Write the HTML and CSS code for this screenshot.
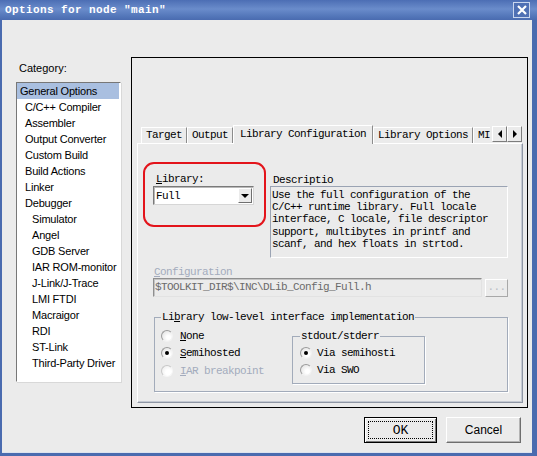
FILE: index.html
```html
<!DOCTYPE html>
<html lang="en">
<head>
	<meta charset="UTF-8">
	<title>Options for node "main"</title>
	<link rel="stylesheet" href="styles.css">
</head>
<body>
	<div class="window">
		<div class="titlebar">
			<span class="title">Options for node "main"</span>
			<span class="close">
				<svg width="10" height="10" viewBox="0 0 10 10"><path d="M1 1L9 9M9 1L1 9" stroke="#fff" stroke-width="2.2"/></svg>
			</span>
		</div>
		<div class="client">
			<div class="main">
				<div class="category">
					<div class="cat-label">Category:</div>
					<ul class="cat-list">
						<li class="sel">General Options</li>
						<li>C/C++ Compiler</li>
						<li>Assembler</li>
						<li>Output Converter</li>
						<li>Custom Build</li>
						<li>Build Actions</li>
						<li>Linker</li>
						<li>Debugger</li>
						<li class="sub">Simulator</li>
						<li class="sub">Angel</li>
						<li class="sub">GDB Server</li>
						<li class="sub">IAR ROM-monitor</li>
						<li class="sub">J-Link/J-Trace</li>
						<li class="sub">LMI FTDI</li>
						<li class="sub">Macraigor</li>
						<li class="sub">RDI</li>
						<li class="sub">ST-Link</li>
						<li class="sub">Third-Party Driver</li>
					</ul>
				</div>
				<div class="page">
					<div class="tabstrip">
						<div class="tablist">
							<span class="tab">Target</span>
							<span class="tab">Output</span>
							<span class="tab active">Library Configuration</span>
							<span class="tab">Library Options</span>
							<span class="tab last">MI</span>
						</div>
						<span class="spin"><i class="arr-left"></i></span>
						<span class="spin"><i class="arr-right"></i></span>
					</div>
					<div class="tabbody">
						<div class="librow">
							<div class="libbox">
								<div class="mono-label"><u>L</u>ibrary:</div>
								<div class="combo">
									<span>Full</span>
									<span class="drop"><i class="arr-down"></i></span>
								</div>
							</div>
							<div class="desc">
								<div class="mono-label">Descriptio</div>
								<div class="desc-text">Use the full configuration of the<br>C/C++ runtime library. Full locale<br>interface, C locale, file descriptor<br>support, multibytes in printf and<br>scanf, and hex floats in strtod.</div>
							</div>
						</div>
						<div class="config">
							<div class="mono-label disabled"><u>C</u>onfiguration</div>
							<div class="config-row">
								<div class="field">$TOOLKIT_DIR$\INC\DLib_Config_Full.h</div>
								<div class="browse">...</div>
							</div>
						</div>
						<fieldset class="group">
							<legend>Li<u>b</u>rary low-level interface implementation</legend>
							<div class="group-body">
								<div class="radios">
									<div class="radio-row"><span class="radio"></span><span><u>N</u>one</span></div>
									<div class="radio-row"><span class="radio on"></span><span><u>S</u>emihosted</span></div>
									<div class="radio-row disabled"><span class="radio off"></span><span><u>I</u>AR breakpoint</span></div>
								</div>
								<fieldset class="subgroup">
									<legend>stdout/stderr</legend>
									<div class="radio-row"><span class="radio on"></span><span>Via semihosti</span></div>
									<div class="radio-row"><span class="radio"></span><span>Via SWO</span></div>
								</fieldset>
							</div>
						</fieldset>
					</div>
				</div>
			</div>
			<div class="buttons">
				<button class="btn default"><span>OK</span></button>
				<button class="btn cancel">Cancel</button>
			</div>
		</div>
	</div>
</body>
</html>
```

FILE: styles.css
```css
*{
	box-sizing: border-box;
}
body,ul,li,fieldset,legend{
	margin: 0;
	padding: 0;
}
body{
	background: #ebebeb;
	font: 11px "Liberation Sans", Arial, sans-serif;
	color: #000;
}
.window{
	width: 537px;
	height: 456px;
	display: flex;
	flex-direction: column;
	background: #4a6baf;
}
/* title bar */
.titlebar{
	height: 20px;
	display: flex;
	align-items: center;
	justify-content: space-between;
	padding: 0 7px 0 5px;
	background: linear-gradient(#4c6eb4, #6a8ccb 45%, #5477ba 80%, #4a6bb0);
}
.title{
	font: bold 11px/14px "Liberation Mono", monospace;
	letter-spacing: 0.4px;
	color: #fff;
}
.close{
	width: 17px;
	height: 16px;
	display: flex;
	align-items: center;
	justify-content: center;
	border: 1px solid #c9d6ee;
	background: #4f70b4;
}
/* client area */
.client{
	flex: 1;
	margin: 0 5px 3px 2px;
	background: #ebebeb;
	display: flex;
	flex-direction: column;
	border-bottom: 1px solid #dde3ee;
}
.main{
	display: flex;
	gap: 10px;
	padding: 37px 0 0 14px;
}
.category{
	width: 105px;
	padding-top: 4px;
}
.cat-label{
	line-height: 14px;
	padding-left: 3px;
	margin-bottom: 7px;
}
.cat-list{
	list-style: none;
	height: 300px;
	background: #fff;
	border: 1px solid;
	border-color: #777 #fff #fff #777;
	box-shadow: 1px 1px 0 #d8d8d8;
	letter-spacing: -0.2px;
}
.cat-list li{
	height: 16px;
	line-height: 16px;
	padding-left: 8px;
	white-space: nowrap;
}
.cat-list .sel{
	padding-left: 3px;
	margin-right: 1px;
	background: #a9bfe0;
}
.cat-list .sub{
	padding-left: 15px;
}
/* property page */
.page{
	width: 397px;
	height: 351px;
	border: 1px solid #000;
	padding: 67px 4px 4px 5px;
	display: flex;
	flex-direction: column;
	font: 11px/12px "Liberation Mono", monospace;
	letter-spacing: -0.6px;
}
.tabstrip{
	height: 18px;
	display: flex;
	align-items: flex-end;
	position: relative;
	z-index: 1;
}
.tablist{
	flex: 1;
	display: flex;
	align-items: flex-end;
	padding-left: 4px;
	overflow: hidden;
	height: 19px;
	margin-bottom: -1px;
}
.tab{
	height: 16px;
	line-height: 15px;
	padding: 0 4px;
	white-space: nowrap;
	border-top: 1px solid #fff;
	border-left: 1px solid #fff;
	border-right: 1px solid #8c8c8c;
	background: #ebebeb;
	margin-bottom: 1px;
}
.tab.active{
	height: 19px;
	padding: 1px 6px 0 6px;
	margin-bottom: 0;
	line-height: 14px;
	position: relative;
	z-index: 2;
}
.tab.last{
	padding: 0 0 0 4px;
	border-right: none;
}
.spin{
	width: 15px;
	height: 16px;
	margin-bottom: 1px;
	display: flex;
	align-items: center;
	justify-content: center;
	background: #ebebeb;
	border: 1px solid;
	border-color: #fff #7c7c7c #7c7c7c #fff;
}
.spin:last-child{
	margin-right: 1px;
}
.arr-left,.arr-right,.arr-down{
	display: block;
	width: 0;
	height: 0;
	border: 4px solid transparent;
}
.arr-left{
	border-right-color: #000;
	border-left-width: 0;
}
.arr-right{
	border-left-color: #000;
	border-right-width: 0;
}
.arr-down{
	border-top-color: #000;
	border-bottom-width: 0;
}
.tabbody{
	flex: 1;
	border: 1px solid;
	border-color: #fff #8e96a4 #8e96a4 #fff;
	box-shadow: inset -1px -1px 0 #c5cad3;
	padding: 18px 0 0 5px;
}
.librow{
	display: flex;
	gap: 4px;
	align-items: flex-start;
}
.libbox{
	width: 123px;
	height: 65px;
	border: 2px solid #e3141b;
	border-radius: 11px;
	padding: 9px 0 0 8px;
}
.libbox .mono-label{
	padding-left: 3px;
	margin-bottom: 1px;
}
.mono-label{
	height: 12px;
	line-height: 12px;
	white-space: nowrap;
}
.combo{
	width: 101px;
	height: 19px;
	display: flex;
	align-items: center;
	justify-content: space-between;
	padding: 0 1px 0 2px;
	background: #fff;
	border: 1px solid;
	border-color: #7a7a7a #d6d6d6 #d6d6d6 #7a7a7a;
	box-shadow: inset 1px 1px 0 #b9b9b9;
}
.drop{
	width: 14px;
	height: 15px;
	display: flex;
	align-items: center;
	justify-content: center;
	background: #ebebeb;
	border: 1px solid;
	border-color: #fff #6f6f6f #6f6f6f #fff;
}
.desc{
	width: 238px;
	padding-top: 12px;
}
.desc .mono-label{
	padding-left: 3px;
}
.desc-text{
	height: 72px;
	padding: 2px 0 0 1px;
	line-height: 12.2px;
	white-space: nowrap;
	border: 1px solid;
	border-color: #9aa3b3 #fff #fff #9aa3b3;
}
.config{
	margin: 8px 0 0 10px;
}
.config .mono-label{
	padding-left: 1px;
}
.disabled,.disabled u{
	color: #a3abbd;
}
.config-row{
	display: flex;
	gap: 3px;
	align-items: flex-start;
}
.field{
	width: 329px;
	height: 19px;
	line-height: 17px;
	padding-left: 1px;
	color: #6a6a6a;
	white-space: nowrap;
	border: 1px solid;
	border-color: #8f8f8f #e2e2e2 #e2e2e2 #8f8f8f;
	box-shadow: inset 1px 1px 0 #c4c4c4;
}
.browse{
	width: 23px;
	height: 18px;
	margin-top: 1px;
	line-height: 14px;
	text-align: center;
	color: #b8bcc4;
	border: 1px solid;
	border-color: #fff #a8a8a8 #a8a8a8 #fff;
}
/* group boxes */
.group{
	width: 354px;
	margin: 14px 0 0 11px;
	padding: 4px 0 7px 6px;
	border: 1px solid #a2abba;
	box-shadow: 1px 1px 0 #fff;
	min-width: 0;
}
.group legend,.subgroup legend{
	padding: 0 1px;
	line-height: 12px;
}
.group-body{
	display: flex;
	align-items: flex-start;
}
.radios{
	width: 131px;
}
.radio-row{
	height: 17.5px;
	display: flex;
	align-items: center;
	gap: 7px;
	white-space: nowrap;
}
.radio{
	position: relative;
	width: 12px;
	height: 12px;
	flex: none;
	border-radius: 50%;
	border: 1px solid;
	border-color: #9b9b9b #f2f2f2 #f2f2f2 #9b9b9b;
	background: radial-gradient(circle at 65% 65%, #fff 20%, #dcdcdc);
}
.radio.on::after{
	content: "";
	position: absolute;
	left: 3px;
	top: 3px;
	width: 4px;
	height: 4px;
	border-radius: 50%;
	background: #000;
}
.radio.off{
	background: radial-gradient(circle at 65% 65%, #fff 30%, #e8e8e8);
	border-color: #c8c8c8 #f6f6f6 #f6f6f6 #c8c8c8;
}
.subgroup{
	width: 133px;
	margin-top: 3px;
	padding: 2px 0 4px 7px;
	border: 1px solid #a2abba;
	box-shadow: 1px 1px 0 #fff;
	min-width: 0;
}
.subgroup .radio-row{
	gap: 5px;
}
/* dialog buttons */
.buttons{
	display: flex;
	justify-content: flex-end;
	gap: 9px;
	padding: 9px 11px 0 0;
}
.btn{
	width: 73px;
	height: 26px;
	padding: 0;
	background: #ebebeb;
	color: #000;
	font: 12px "Liberation Sans", Arial, sans-serif;
	border: 1px solid;
	border-color: #fff #6e6e6e #6e6e6e #fff;
	box-shadow: inset -1px -1px 0 #b4b4b4;
}
.btn.default{
	border: 1px solid #000;
	box-shadow: inset 1px 1px 0 #fff, inset -1px -1px 0 #7a7a7a;
	font: 13px "Liberation Mono", monospace;
	outline: 1px dotted #000;
	outline-offset: -5px;
}
.btn.cancel{
	width: 75px;
}
```
